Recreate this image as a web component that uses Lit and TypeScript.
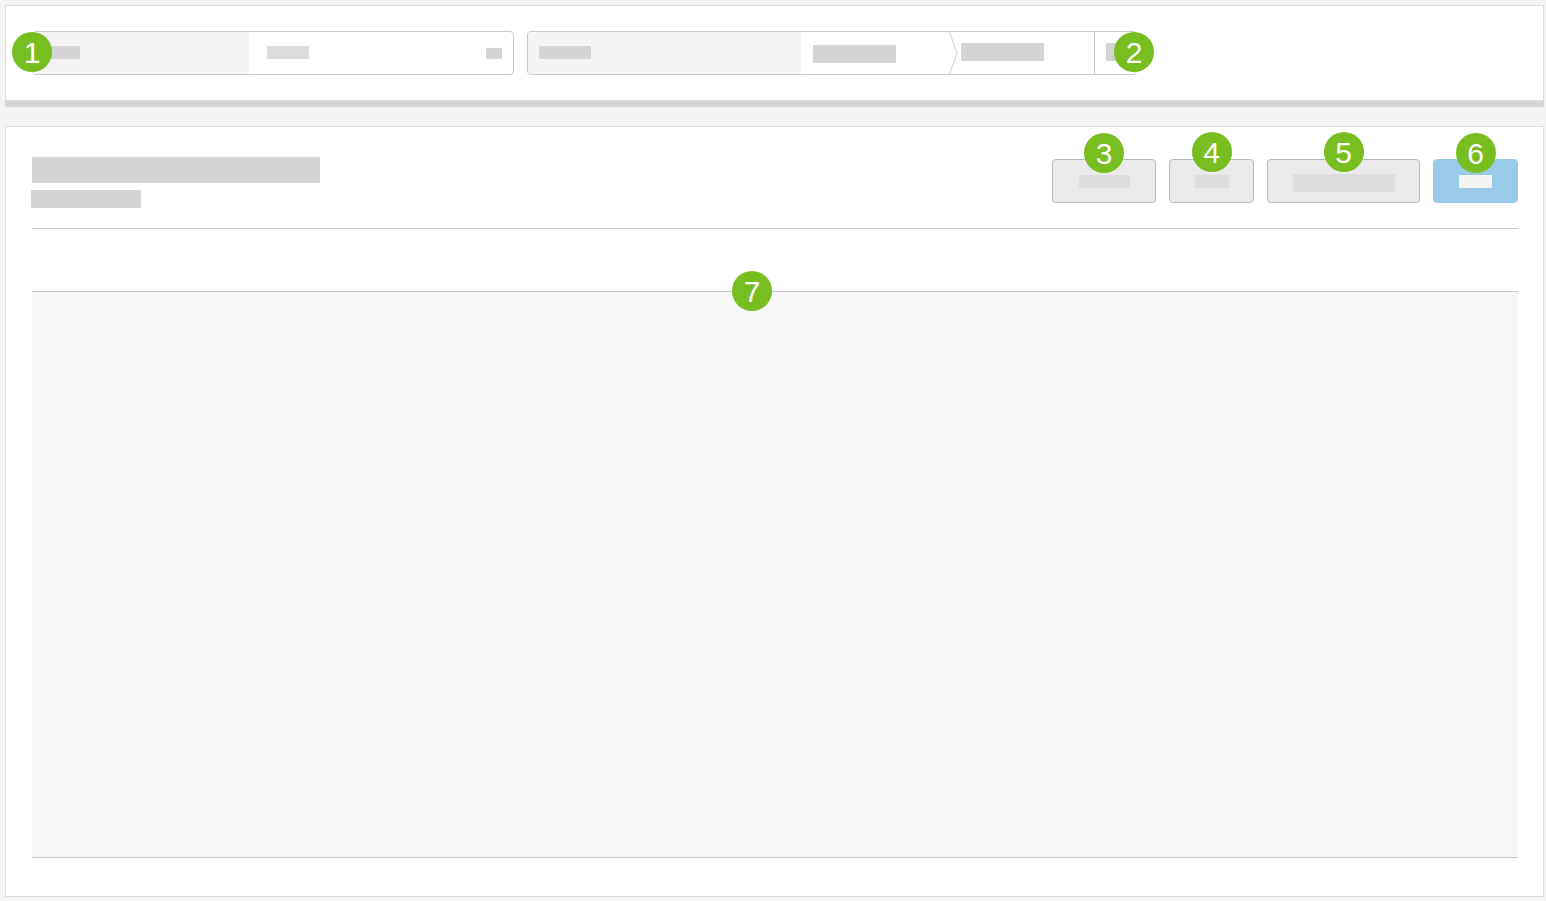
import { LitElement, html, css } from "lit";
import { customElement, property } from "lit/decorators.js";
import { classMap } from "lit/directives/class-map.js";

@customElement("step-badge")
class StepBadge extends LitElement {
  static styles = css`
    :host {
      display: block;
      box-sizing: border-box;
      width: 40px;
      height: 40px;
      border-radius: 50%;
      background: #78be20;
      color: #fff;
      font: 30px/42px "Liberation Sans", Arial, sans-serif;
      text-align: center;
      pointer-events: none;
    }
  `;
  render() {
    return html`<slot></slot>`;
  }
}

@customElement("action-button")
class ActionButton extends LitElement {
  @property({ type: Boolean }) primary = false;
  @property() label = "";

  static styles = css`
    :host {
      display: block;
    }
    button {
      display: flex;
      box-sizing: border-box;
      width: 100%;
      height: 44px;
      margin: 0;
      padding: 0;
      align-items: center;
      justify-content: center;
      border: 1px solid #bababa;
      border-radius: 4px;
      background: #eaeaea;
    }
    button.primary {
      border-color: #99cae7;
      background: #99cae7;
    }
  `;
  render() {
    return html`<button
      type="button"
      aria-label=${this.label}
      class=${classMap({ primary: this.primary })}
    >
      <slot></slot>
    </button>`;
  }
}

@customElement("app-root")
class AppRoot extends LitElement {
  static styles = css`
    :host {
      display: flex;
      flex-direction: column;
      gap: 18px;
      box-sizing: border-box;
      min-height: 100vh;
      padding: 5px 2px 4px 5px;
      background: #f4f4f4;
      font-family: "Liberation Sans", Arial, sans-serif;
    }
    * {
      box-sizing: border-box;
    }
    .filters {
      border: 1px solid #dcdcdc;
      background: #fff;
      padding: 25px 26px;
    }
    .top {
      border-bottom: 1px solid #ebebeb;
    }
    .rule {
      height: 6px;
      background: #d5d5d5;
    }
    .row {
      display: flex;
      gap: 13px;
    }
    .field {
      position: relative;
      display: flex;
      height: 44px;
      border: 1px solid #c8c8c8;
      border-radius: 4px;
      background: #fff;
    }
    .seg {
      display: flex;
      align-items: center;
      margin: 0;
      border: 0;
      border-radius: 0;
      background: none;
      padding: 0 11px 1px;
    }
    .name {
      border-radius: 3px 0 0 3px;
      background: #f4f4f4;
    }
    .name-a {
      width: 216px;
    }
    .name-b {
      width: 273px;
    }
    .picker {
      width: 264px;
      padding-left: 18px;
      justify-content: space-between;
    }
    .crumb-a {
      width: 148px;
      padding: 2px 11px 0 12px;
    }
    .crumb-b {
      width: 136px;
      padding: 0 0 2px 3px;
    }
    .more {
      width: 42px;
      border-left: 1px solid #c8c8c8;
      padding-bottom: 2px;
      overflow: hidden;
    }
    .chevron {
      display: block;
      width: 9px;
      height: 42px;
    }
    .block {
      display: block;
      flex: none;
      height: 13px;
      border-radius: 1px;
      background: #d4d4d4;
    }
    .light {
      border-radius: 0;
      background: #ddd;
    }
    .pale {
      border-radius: 0;
      background: #f4f4f4;
    }
    .h11 {
      height: 11px;
      margin-top: 2px;
    }
    .h18 {
      height: 18px;
    }
    .h26 {
      height: 26px;
    }
    .w16 { width: 16px; }
    .w33 { width: 33px; }
    .w34 { width: 34px; }
    .w36 { width: 36px; }
    .w42 { width: 42px; }
    .w51 { width: 51px; }
    .w52 { width: 52px; }
    .w83 { width: 83px; }
    .w102 { width: 102px; }
    .w110 { width: 110px; }
    .w288 { width: 288px; }
    .action .block {
      margin-top: 1px;
    }
    .action .h18 {
      margin-top: 3px;
    }
    .panel {
      flex: 1;
      display: flex;
      flex-direction: column;
      border: 1px solid #dcdcdc;
      background: #fff;
      padding: 30px 25px 38px 26px;
    }
    .head {
      display: flex;
      justify-content: space-between;
      align-items: flex-start;
      padding-bottom: 20px;
      border-bottom: 1px solid #c8c8c8;
    }
    .titles {
      display: flex;
      flex-direction: column;
      gap: 7px;
      margin-left: -1px;
    }
    .title {
      margin: 0 0 0 1px;
    }
    .actions {
      display: flex;
      gap: 13px;
      padding-top: 2px;
    }
    .action {
      position: relative;
      width: 85px;
    }
    .medium {
      width: 104px;
    }
    .wide {
      width: 153px;
    }
    .content {
      position: relative;
      flex: 1;
      margin-top: 62px;
      border: 1px solid #c8c8c8;
      border-width: 1px 0;
      background: #f7f7f7;
    }
    step-badge {
      position: absolute;
    }
    .at-start {
      left: -21px;
      top: 0;
    }
    .at-end {
      right: -18px;
      top: 0;
    }
    .above {
      left: calc(50% - 20px);
      top: -26px;
    }
    .higher {
      top: -27px;
    }
    .on-edge {
      left: calc(50% - 43px);
      top: -21px;
    }
  `;

  render() {
    return html`
      <header class="top">
        <div class="filters">
          <div class="row">
            <div class="field">
              <div class="seg name name-a"><span class="block w36"></span></div>
              <button type="button" class="seg picker" aria-label="Select">
                <span class="block light w42"></span>
                <span class="block w16 h11"></span>
              </button>
              <step-badge class="at-start">1</step-badge>
            </div>
            <div class="field">
              <div class="seg name name-b"><span class="block w52"></span></div>
              <button type="button" class="seg crumb-a" aria-label="First level">
                <span class="block w83 h18"></span>
              </button>
              <svg class="chevron" viewBox="0 0 9 42" aria-hidden="true">
                <path d="M0.5 0L8 21L0.5 42" fill="none" stroke="#d0d0d0" />
              </svg>
              <button type="button" class="seg crumb-b" aria-label="Second level">
                <span class="block w83 h18"></span>
              </button>
              <button type="button" class="seg more" aria-label="More">
                <span class="block w16 h18"></span>
              </button>
              <step-badge class="at-end">2</step-badge>
            </div>
          </div>
        </div>
        <div class="rule"></div>
      </header>
      <main class="panel">
        <div class="head">
          <div class="titles">
            <span class="block title w288 h26"></span>
            <span class="block w110 h18"></span>
          </div>
          <div class="actions">
            <div class="action medium">
              <action-button label="Action 3"><span class="block light w51"></span></action-button>
              <step-badge class="above">3</step-badge>
            </div>
            <div class="action">
              <action-button label="Action 4"><span class="block light w34"></span></action-button>
              <step-badge class="above higher">4</step-badge>
            </div>
            <div class="action wide">
              <action-button label="Action 5"><span class="block light w102 h18"></span></action-button>
              <step-badge class="above higher">5</step-badge>
            </div>
            <div class="action">
              <action-button label="Action 6" primary><span class="block pale w33"></span></action-button>
              <step-badge class="above">6</step-badge>
            </div>
          </div>
        </div>
        <section class="content">
          <step-badge class="on-edge">7</step-badge>
        </section>
      </main>
    `;
  }
}
